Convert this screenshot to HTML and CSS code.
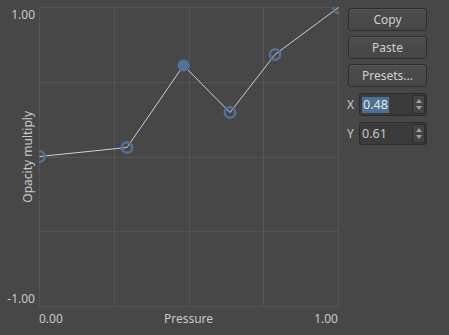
FILE: index.html
```html
<!DOCTYPE html>
<html lang="en">
<head>
  <meta charset="UTF-8" />
  <title>Curve Editor</title>
  <link rel="stylesheet" href="styles.css">
</head>
<body>
<div class="editor">
  <div class="plot">
    <div class="y-axis">
      <span class="y-max">1.00</span>
      <span class="y-title">Opacity multiply</span>
      <span class="y-min">-1.00</span>
    </div>
    <svg class="curve" width="300" height="300" viewBox="0 0 300 300">
      <g class="grid">
        <line x1="0.5" y1="0" x2="0.5" y2="300"/>
        <line x1="75.5" y1="0" x2="75.5" y2="300"/>
        <line x1="150.5" y1="0" x2="150.5" y2="300"/>
        <line x1="224.5" y1="0" x2="224.5" y2="300"/>
        <line x1="299.5" y1="0" x2="299.5" y2="300"/>
        <line x1="0" y1="0.5" x2="300" y2="0.5"/>
        <line x1="0" y1="75.5" x2="300" y2="75.5"/>
        <line x1="0" y1="150.5" x2="300" y2="150.5"/>
        <line x1="0" y1="224.5" x2="300" y2="224.5"/>
        <line x1="0" y1="299.5" x2="300" y2="299.5"/>
      </g>
      <polyline class="path" points="0.5,149.5 88,140.5 144.5,58.5 191,105.5 236,47.5 299.5,0.5"/>
      <g class="point">
        <circle cx="0.5" cy="149.5" r="5.2"/>
        <circle cx="88" cy="140.5" r="5.2"/>
        <circle cx="191" cy="105.5" r="5.2"/>
        <circle cx="236" cy="47.5" r="5.2"/>
        <circle cx="299.5" cy="0.5" r="5.2"/>
      </g>
      <circle class="point-active" cx="144.5" cy="58.5" r="6"/>
    </svg>
    <div class="x-axis">
      <span>0.00</span>
      <span>Pressure</span>
      <span>1.00</span>
    </div>
  </div>

  <div class="side">
    <button class="btn">Copy</button>
    <button class="btn">Paste</button>
    <button class="btn">Presets...</button>
    <div class="spin-row">
      <span class="spin-label">X</span>
      <div class="spinbox">
        <span class="spin-value"><span class="selected">0.48</span></span>
        <span class="spin-arrows"><span class="up"></span><span class="down"></span></span>
      </div>
    </div>
    <div class="spin-row">
      <span class="spin-label">Y</span>
      <div class="spinbox">
        <span class="spin-value">0.61</span>
        <span class="spin-arrows"><span class="up"></span><span class="down"></span></span>
      </div>
    </div>
  </div>
</div>
</body>
</html>
```

FILE: styles.css
```css
body {
  margin: 0;
  background: #474747;
  color: #c9c9c9;
  font-family: "Noto Sans", "Open Sans", sans-serif;
  font-size: 12px;
  width: 449px;
  height: 335px;
  overflow: hidden;
}
.editor {
  display: flex;
  align-items: flex-start;
  padding-top: 7px;
}

/* Plot */
.plot {
  display: grid;
  grid-template-columns: 39px 300px;
  grid-template-rows: 300px auto;
}
.y-axis {
  display: grid;
  grid-template-rows: auto 1fr auto;
  line-height: 16px;
}
.y-max, .y-min {
  text-align: right;
  padding-right: 4px;
}
.y-title {
  writing-mode: vertical-rl;
  transform: rotate(180deg);
  justify-self: end;
  align-self: center;
  margin-right: 3px;
  line-height: 16px;
}
.curve {
  display: block;
}
.grid line {
  stroke: #555555;
  stroke-width: 1;
}
.path {
  fill: none;
  stroke: #cfcfcf;
  stroke-width: 1;
}
.point circle {
  fill: none;
  stroke: #4f739a;
  stroke-width: 2.6;
}
.point-active {
  fill: #4f739a;
}
.x-axis {
  grid-column: 2;
  display: flex;
  justify-content: space-between;
  line-height: 16px;
  margin-top: 4px;
  padding-right: 1px;
}

/* Side panel */
.side {
  display: flex;
  flex-direction: column;
  gap: 5px;
  width: 79px;
  margin-left: 9px;
  padding-top: 1px;
}
.btn {
  height: 23px;
  background: linear-gradient(#4d4d4d, #464646);
  border: 1px solid #2e2e2e;
  border-radius: 3px;
  color: #d0d0d0;
  font: inherit;
  padding: 0;
  box-shadow: inset 0 1px 0 #555;
}
.spin-row {
  display: flex;
  align-items: center;
  gap: 6px;
  margin-top: 1px;
  margin-left: -1px;
}
.spin-label {
  width: 6px;
  line-height: 16px;
}
.spinbox {
  flex: 1;
  display: flex;
  height: 23px;
  box-sizing: border-box;
  background: #3b3b3b;
  border: 1px solid #2c2c2c;
  border-radius: 3px;
}
.spin-value {
  flex: 1;
  display: flex;
  align-items: center;
  padding-left: 2px;
  font-size: 12.5px;
}
.selected {
  background: #4d7096;
  color: #e8e8e8;
  padding: 0 1px;
  line-height: 16px;
}
.spin-arrows {
  width: 11px;
  margin: 1px;
  border: 1px solid #2c2c2c;
  border-radius: 2px;
  background: #434343;
  display: flex;
  flex-direction: column;
  justify-content: center;
  align-items: center;
  gap: 3px;
}
.up, .down {
  width: 0;
  height: 0;
  border-left: 3.5px solid transparent;
  border-right: 3.5px solid transparent;
}
.up { border-bottom: 4px solid #a0a0a0; }
.down { border-top: 4px solid #a0a0a0; }
```
